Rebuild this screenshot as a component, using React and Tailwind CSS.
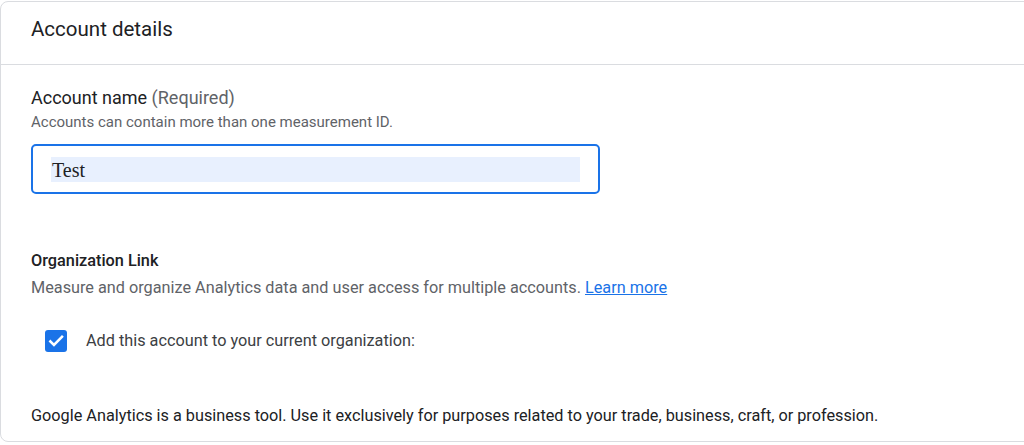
import React from "react";

export default function App() {
  return (
    <div className="w-[1024px] h-[445px] overflow-hidden bg-white" style={{ fontFamily: "Roboto, 'Liberation Sans', sans-serif" }}>
      <div className="mt-[1px] w-[1100px] h-[441px] border border-[#dadce0] rounded-lg bg-white flex flex-col">
        <div className="h-[63px] border-b border-[#dadce0] pl-[30px] pt-[15px]">
          <div className="text-[20.5px] leading-[24px] text-[#202124]">Account details</div>
        </div>
        <div className="pl-[30px] pt-[22px] flex flex-col">
          <div className="text-[18px] leading-[22px] text-[#202124]">
            Account name <span className="text-[#5f6368]">(Required)</span>
          </div>
          <div className="text-[15px] leading-[18px] text-[#5f6368] mt-[4px]">
            Accounts can contain more than one measurement ID.
          </div>
          <div className="mt-[13px] w-[569px] h-[50px] border-2 border-[#1a73e8] rounded-[5px] px-[18px] pt-[11px]">
            <div className="h-[25px] bg-[#e8f0fe] pl-[1px] flex items-center text-[20px] text-[#202124]" style={{ fontFamily: "'Liberation Serif', serif" }}>
              Test
            </div>
          </div>
          <div className="mt-[57px] text-[16.3px] leading-[20px] font-medium text-[#202124]">Organization Link</div>
          <div className="mt-[7px] text-[16.25px] leading-[20px] text-[#5f6368]">
            Measure and organize Analytics data and user access for multiple accounts.{" "}
            <a className="text-[#1a73e8] underline">Learn more</a>
          </div>
          <div className="mt-[32px] h-[22px] flex items-center pl-[14px]">
            <div className="w-[22px] h-[22px] rounded-[3px] bg-[#1a73e8] flex items-center justify-center">
              <svg width="18" height="18" viewBox="0 0 24 24" fill="none" stroke="white" strokeWidth="3.4" strokeLinecap="square">
                <path d="M4.5 12.5l4.8 4.8L20 6.5" />
              </svg>
            </div>
            <span className="ml-[19px] text-[16.25px] leading-[20px] text-[#3c4043]">Add this account to your current organization:</span>
          </div>
          <div className="mt-[54px] text-[16.25px] leading-[20px] text-[#202124]">
            Google Analytics is a business tool. Use it exclusively for purposes related to your trade, business, craft, or profession.
          </div>
        </div>
      </div>
    </div>
  );
}
